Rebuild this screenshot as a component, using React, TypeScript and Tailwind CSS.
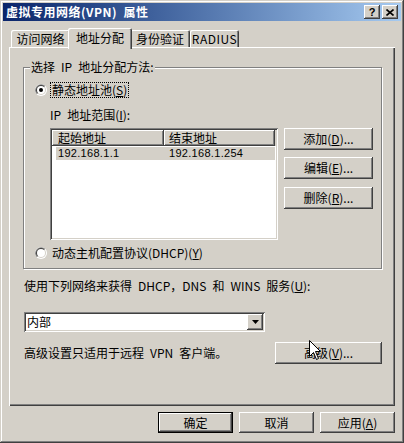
import React from "react";

const RAISED =
  "shadow-[inset_-1px_-1px_0_#404040,inset_1px_1px_0_#ffffff,inset_-2px_-2px_0_#808080]";
const SUNKEN =
  "shadow-[inset_1px_1px_0_#808080,inset_-1px_-1px_0_#ffffff,inset_2px_2px_0_#404040,inset_-2px_-2px_0_#d4d0c8]";

function Radio({ checked }: { checked?: boolean }) {
  return (
    <svg width="12" height="12" viewBox="0 0 12 12" className="shrink-0">
      <circle cx="6" cy="6" r="6" fill="#ffffff" />
      <path d="M1.76 10.24A6 6 0 0 1 10.24 1.76Z" fill="#808080" />
      <circle cx="6" cy="6" r="5" fill="#d4d0c8" />
      <path d="M2.46 9.54A5 5 0 0 1 9.54 2.46Z" fill="#404040" />
      <circle cx="6" cy="6" r="4" fill="#ffffff" />
      {checked && <circle cx="6" cy="6" r="2" fill="#000000" />}
    </svg>
  );
}

function Btn({
  children,
  className = "",
}: {
  children: React.ReactNode;
  className?: string;
}) {
  return (
    <div
      className={`flex items-center justify-center bg-[#d4d0c8] ${RAISED} ${className}`}
    >
      {children}
    </div>
  );
}

export default function App() {
  return (
    <div
      className="w-[404px] h-[443px] bg-[#d4d0c8] p-[3px] flex flex-col text-[12px] leading-[16px] text-black font-['Noto_Sans_CJK_SC','Liberation_Sans',sans-serif] shadow-[inset_-1px_-1px_0_#404040,inset_1px_1px_0_#d4d0c8,inset_-2px_-2px_0_#808080,inset_2px_2px_0_#ffffff] overflow-hidden"
    >
      {/* Title bar */}
      <div className="h-[18px] shrink-0 flex items-center bg-linear-to-r from-[#0a246a] to-[#a6caf0] pl-[3px] pr-[3px]">
        <div className="flex-1 text-white font-bold text-[12px] leading-[18px] tracking-[0.5px]">
          虚拟专用网络(VPN){"\u2002"}属性
        </div>
        <Btn className="w-[16px] h-[14px] text-[11px] leading-[14px] font-bold font-['Liberation_Sans',sans-serif]">
          ?
        </Btn>
        <Btn className="w-[16px] h-[14px] ml-[2px]">
          <svg width="8" height="7" viewBox="0 0 8 7">
            <path d="M0.5 0.5L7.5 6.5M7.5 0.5L0.5 6.5" stroke="#000" strokeWidth="1.6" />
          </svg>
        </Btn>
      </div>

      {/* Content */}
      <div className="flex flex-col px-[6px] pt-[7px]">
        {/* Tabs */}
        <div className="flex items-end h-[19px] pl-[2px] relative z-10">
          <div className="w-[59px] h-[17px] flex items-center justify-center rounded-t-[2px] bg-[#d4d0c8] shadow-[inset_1px_1px_0_#ffffff,inset_-1px_0_0_#404040,inset_-2px_0_0_#808080]">
            访问网络
          </div>
          <div className="w-[64px] h-[21px] -mx-[2px] -mb-[2px] relative z-10 flex items-start pt-[2px] justify-center rounded-t-[2px] bg-[#d4d0c8] shadow-[inset_1px_1px_0_#ffffff,inset_-1px_0_0_#404040,inset_-2px_0_0_#808080]">
            地址分配
          </div>
          <div className="w-[60px] h-[17px] flex items-center justify-center rounded-t-[2px] bg-[#d4d0c8] shadow-[inset_1px_1px_0_#ffffff,inset_-1px_0_0_#404040,inset_-2px_0_0_#808080]">
            身份验证
          </div>
          <div className="w-[49px] h-[17px] flex items-center justify-center rounded-t-[2px] bg-[#d4d0c8] tracking-[0.5px] shadow-[inset_1px_1px_0_#ffffff,inset_-1px_0_0_#404040,inset_-2px_0_0_#808080]">
            RADIUS
          </div>
        </div>

        {/* Panel */}
        <div className="h-[359px] bg-[#d4d0c8] shadow-[inset_1px_1px_0_#ffffff,inset_-1px_-1px_0_#404040,inset_-2px_-2px_0_#808080] pt-[20px] px-[14px] flex flex-col">
          {/* Group box */}
          <div className="relative w-[359px] h-[202px] border border-[#808080] shadow-[inset_1px_1px_0_#ffffff,1px_1px_0_#ffffff] flex flex-col pt-[14px] pl-[11px]">
            <div className="absolute left-[6px] -top-[9px] bg-[#d4d0c8] px-[1px] leading-[16px]">
              选择{"\u2002"}IP{"\u2002"}地址分配方法:
            </div>
            <div className="flex items-center h-[16px]">
              <Radio checked />
              <span className="ml-[3px] px-[1px] border border-dotted border-black leading-[14px]">
                静态地址池(<u>S</u>)
              </span>
            </div>
            <div className="mt-[9px] ml-[15px] h-[16px]">
              IP{"\u2002"}地址范围(<u>I</u>):
            </div>
            <div className="mt-[5px] ml-[15px] flex">
              <div className={`w-[228px] h-[112px] bg-white p-[2px] ${SUNKEN}`}>
                <div className="flex h-[16px] bg-[#d4d0c8]">
                  <div className={`w-[112px] h-[16px] pl-[6px] leading-[15px] ${RAISED}`}>
                    起始地址
                  </div>
                  <div className={`w-[111px] h-[16px] pl-[5px] leading-[15px] ${RAISED}`}>
                    结束地址
                  </div>
                </div>
                <div className="mt-[1px] ml-[4px] mr-[1px] h-[13px] bg-[#d4d0c8] flex items-center text-[11px] leading-[13px] font-['Liberation_Sans',sans-serif] tracking-[0.3px]">
                  <div className="w-[108px] pl-[2px]">192.168.1.1</div>
                  <div className="pl-[5px]">192.168.1.254</div>
                </div>
              </div>
              <div className="ml-[6px] flex flex-col">
                <Btn className="w-[89px] h-[22px]">
                  添加(<u>D</u>)...
                </Btn>
                <Btn className="w-[89px] h-[22px] mt-[7px]">
                  编辑(<u>E</u>)...
                </Btn>
                <Btn className="w-[89px] h-[22px] mt-[8px]">
                  删除(<u>R</u>)...
                </Btn>
              </div>
            </div>
            <div className="mt-[5px] flex items-center h-[16px]">
              <Radio />
              <span className="ml-[4px] px-[1px]">
                动态主机配置协议(DHCP)(<u>Y</u>)
              </span>
            </div>
          </div>

          <div className="mt-[9px] ml-[1px] h-[16px]">
            使用下列网络来获得{"\u2002"}DHCP，DNS{"\u2002"}和{"\u2002"}WINS{"\u2002"}服务(<u>U</u>):
          </div>

          <div className={`mt-[18px] ml-[1px] w-[241px] h-[20px] bg-white p-[2px] flex items-center ${SUNKEN}`}>
            <div className="flex-1 pl-[1px] leading-[16px]">内部</div>
            <Btn className="w-[16px] h-[16px]">
              <svg width="7" height="4" viewBox="0 0 7 4">
                <path d="M0 0H7L3.5 4Z" fill="#000" />
              </svg>
            </Btn>
          </div>

          <div className="mt-[10px] ml-[1px] w-[358px] flex items-center justify-between">
            <div>高级设置只适用于远程{"\u2002"}VPN{"\u2002"}客户端。</div>
            <div className="relative">
              <Btn className="w-[107px] h-[22px]">
                高级(<u>V</u>)...
              </Btn>
              <svg
                className="absolute left-[34px] -top-[2px]"
                width="13"
                height="21"
                viewBox="0 0 13 21"
              >
                <path
                  d="M0.5 0.5V16.5L4.5 12.5L7.5 19.5L9.5 18.5L6.5 11.5H11.5Z"
                  fill="#ffffff"
                  stroke="#000000"
                  strokeWidth="1"
                />
              </svg>
            </div>
          </div>
        </div>

        {/* Bottom buttons */}
        <div className="mt-[6px] flex justify-end gap-[6px]">
          <div className={`w-[75px] h-[21px] border border-black flex items-center justify-center bg-[#d4d0c8] ${RAISED}`}>
            确定
          </div>
          <Btn className="w-[75px] h-[21px]">取消</Btn>
          <Btn className="w-[75px] h-[21px]">
            应用(<u>A</u>)
          </Btn>
        </div>
      </div>
    </div>
  );
}
